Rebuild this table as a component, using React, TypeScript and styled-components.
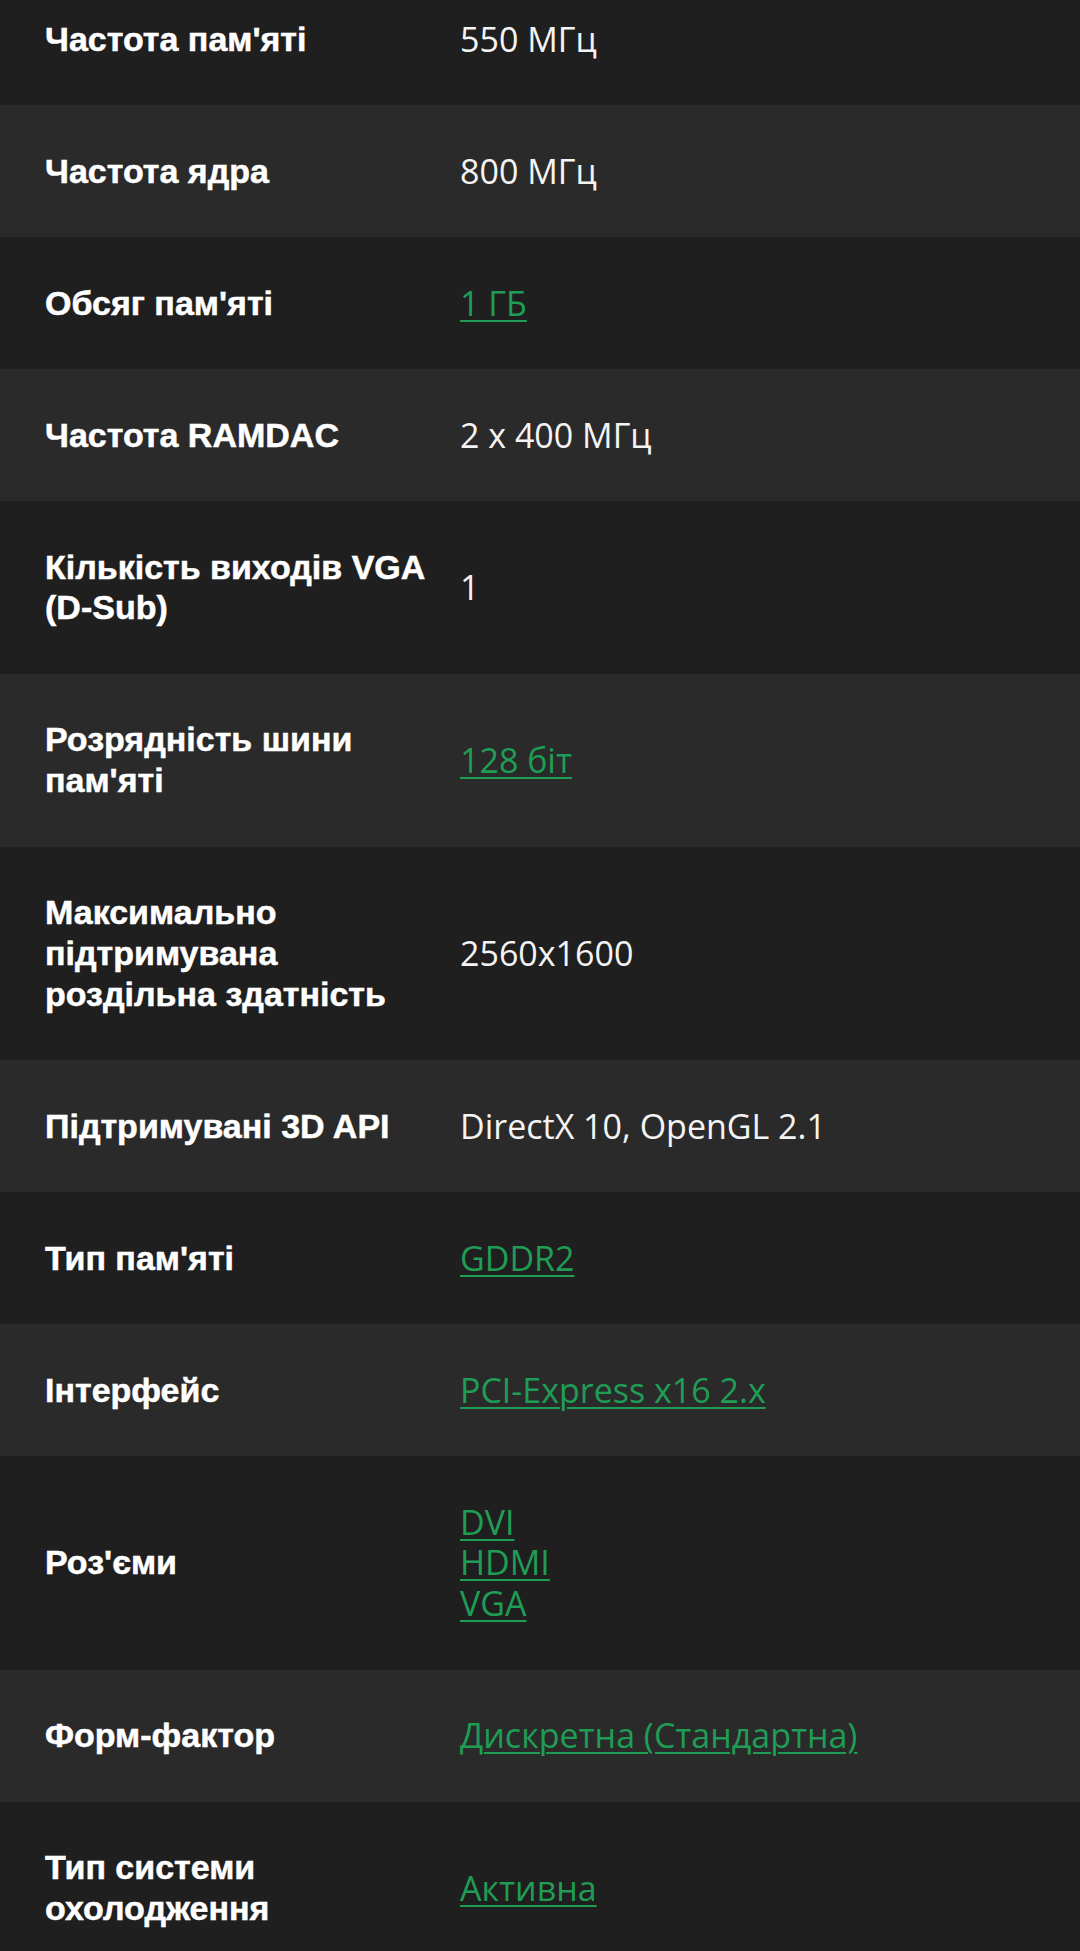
import React from "react";
import styled, { createGlobalStyle } from "styled-components";

const GlobalStyle = createGlobalStyle`
  html, body {
    margin: 0;
    padding: 0;
    background: #1f1f1f;
  }
  body {
    font-family: "Liberation Sans", Arial, sans-serif;
    -webkit-font-smoothing: antialiased;
  }
`;

type Spec = {
  label: string;
  values: string[];
  link?: boolean;
};

const specs: Spec[] = [
  { label: "Частота пам'яті", values: ["550 МГц"] },
  { label: "Частота ядра", values: ["800 МГц"] },
  { label: "Обсяг пам'яті", values: ["1 ГБ"], link: true },
  { label: "Частота RAMDAC", values: ["2 x 400 МГц"] },
  { label: "Кількість виходів VGA (D-Sub)", values: ["1"] },
  { label: "Розрядність шини пам'яті", values: ["128 біт"], link: true },
  { label: "Максимально підтримувана роздільна здатність", values: ["2560x1600"] },
  { label: "Підтримувані 3D API", values: ["DirectX 10, OpenGL 2.1"] },
  { label: "Тип пам'яті", values: ["GDDR2"], link: true },
  { label: "Інтерфейс", values: ["PCI-Express x16 2.x"], link: true },
  { label: "Роз'єми", values: ["DVI", "HDMI", "VGA"], link: true },
  { label: "Форм-фактор", values: ["Дискретна (Стандартна)"], link: true },
  { label: "Тип системи охолодження", values: ["Активна"], link: true },
];

const SpecList = styled.dl`
  margin: -27px 0 0;
  padding: 0;
  display: flex;
  flex-direction: column;
`;

const SpecRow = styled.div<{ $striped: boolean }>`
  display: grid;
  grid-template-columns: 395px 1fr;
  column-gap: 20px;
  align-items: center;
  padding: 45.6px 40px 45.6px 45px;
  background: ${(p) => (p.$striped ? "#2b2a2a" : "#201f1f")};
`;

const Label = styled.dt`
  margin: 0;
  color: #ffffff;
  font-family: "Liberation Sans", Arial, sans-serif;
  font-weight: 700;
  font-size: 34px;
  line-height: 40.8px;
  -webkit-text-stroke: 0.5px #ffffff;
`;

const Value = styled.dd`
  margin: 0;
  display: flex;
  flex-direction: column;
  align-items: flex-start;
  color: #f4f4f4;
  font-family: "Open Sans", "Noto Sans", sans-serif;
  font-weight: 400;
  font-size: 34px;
  line-height: 40.8px;
`;

const ValueLink = styled.a`
  display: block;
  height: 40.8px;
  color: #1f9d55;
  text-decoration: underline;
  text-decoration-thickness: 2px;
  text-underline-offset: 4px;
  cursor: pointer;
`;

const ValueText = styled.span`
  color: #f4f4f4;
`;

export default function App() {
  return (
    <>
      <GlobalStyle />
      <SpecList>
        {specs.map((s, i) => (
          <SpecRow key={s.label} $striped={i % 2 === 1}>
            <Label>{s.label}</Label>
            <Value>
              {s.values.map((v) =>
                s.link ? (
                  <ValueLink key={v} href="#">
                    {v}
                  </ValueLink>
                ) : (
                  <ValueText key={v}>{v}</ValueText>
                )
              )}
            </Value>
          </SpecRow>
        ))}
      </SpecList>
    </>
  );
}
